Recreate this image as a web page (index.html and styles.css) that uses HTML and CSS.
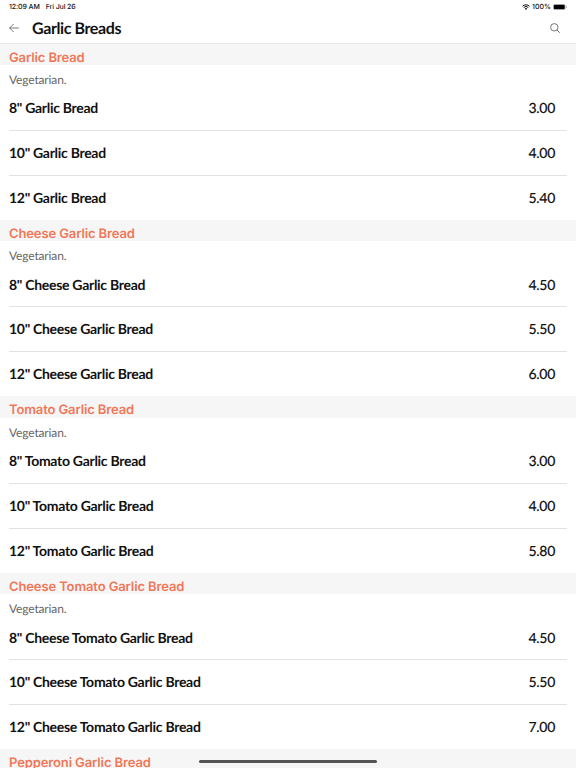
FILE: index.html
```
<!DOCTYPE html>
<html lang="en">
  <head>
    <meta charset="utf-8">
    <title>Garlic Breads</title>
    <link rel="stylesheet" href="styles.css">
  </head>
  <body>
    <div class="status-bar">
      <span class="time">12:09 AM</span>
      <span class="date">Fri Jul 26</span>
      <svg class="wifi" viewBox="0 0 16 12">
        <path d="M1 4.5a10 10 0 0 1 14 0M3.4 7a6.6 6.6 0 0 1 9.2 0" fill="none" stroke="#111" stroke-width="2"/>
        <path d="M5.4 9.2a3.8 3.8 0 0 1 5.2 0L8 12z" fill="#111"/>
      </svg>
      <span class="percent">100%</span>
      <svg class="battery" viewBox="0 0 28 12">
        <rect x="0.5" y="0.5" width="24" height="11" rx="3" fill="#fff" stroke="#999"/>
        <rect x="1.5" y="1.5" width="22" height="9" rx="2" fill="#000"/>
        <path d="M26 4v4q1.5-.5 1.5-2T26 4z" fill="#888"/>
      </svg>
    </div>
    <header class="nav">
      <svg class="back" viewBox="0 0 10 10">
        <path d="M9.8 5H.6M4.6 1L.6 5l4 4" fill="none" stroke="#555" stroke-width=".8"/>
      </svg>
      <h1>Garlic Breads</h1>
      <svg class="search" viewBox="0 0 10 10">
        <circle cx="4.3" cy="4.3" r="3.7" fill="none" stroke="#555" stroke-width=".8"/>
        <path d="M7 7l2.7 2.7" stroke="#555" stroke-width=".9"/>
      </svg>
    </header>

    <main class="menu">
      <section>
        <h2>Garlic Bread</h2>
        <p>Vegetarian.</p>
        <ul>
          <li><span class="name">8" Garlic Bread</span><span class="price">3.00</span></li>
          <li><span class="name">10" Garlic Bread</span><span class="price">4.00</span></li>
          <li><span class="name">12" Garlic Bread</span><span class="price">5.40</span></li>
        </ul>
      </section>
      <section>
        <h2>Cheese Garlic Bread</h2>
        <p>Vegetarian.</p>
        <ul>
          <li><span class="name">8" Cheese Garlic Bread</span><span class="price">4.50</span></li>
          <li><span class="name">10" Cheese Garlic Bread</span><span class="price">5.50</span></li>
          <li><span class="name">12" Cheese Garlic Bread</span><span class="price">6.00</span></li>
        </ul>
      </section>
      <section>
        <h2>Tomato Garlic Bread</h2>
        <p>Vegetarian.</p>
        <ul>
          <li><span class="name">8" Tomato Garlic Bread</span><span class="price">3.00</span></li>
          <li><span class="name">10" Tomato Garlic Bread</span><span class="price">4.00</span></li>
          <li><span class="name">12" Tomato Garlic Bread</span><span class="price">5.80</span></li>
        </ul>
      </section>
      <section>
        <h2>Cheese Tomato Garlic Bread</h2>
        <p>Vegetarian.</p>
        <ul>
          <li><span class="name">8" Cheese Tomato Garlic Bread</span><span class="price">4.50</span></li>
          <li><span class="name">10" Cheese Tomato Garlic Bread</span><span class="price">5.50</span></li>
          <li><span class="name">12" Cheese Tomato Garlic Bread</span><span class="price">7.00</span></li>
        </ul>
      </section>
      <section>
        <h2>Pepperoni Garlic Bread</h2>
      </section>
    </main>
    <div class="home-indicator"></div>
  </body>
</html>
```

FILE: styles.css
```
* {
  box-sizing: border-box;
  margin: 0;
  padding: 0;
}
body {
  height: 768px;
  overflow: hidden;
  background: #fff;
  color: #111;
  font-family: Lato, sans-serif;
  text-rendering: geometricPrecision;
}
.status-bar {
  display: flex;
  align-items: center;
  height: 14px;
  padding: 0 9px;
  font: 500 7px/14px Inter, sans-serif;
}
.time,
.date {
  letter-spacing: -.1px;
}
.date {
  margin-left: 6px;
}
.wifi {
  width: 8px;
  height: 6px;
  margin-left: auto;
}
.percent {
  margin: 0 2px;
}
.battery {
  width: 14px;
  height: 6px;
}
.nav {
  display: flex;
  align-items: center;
  height: 29.5px;
  padding: 0 16px 0 9px;
  border-bottom: 1px solid #e9e9e9;
}
.back {
  width: 10px;
  height: 10px;
}
.nav h1 {
  flex: 1;
  margin-left: 13px;
  padding-top: 2px;
  font-size: 16px;
  font-weight: 700;
  letter-spacing: -.4px;
  line-height: 28px;
}
.search {
  width: 10px;
  height: 10px;
}
section h2 {
  height: 21.5px;
  padding: 0 9px;
  background: #f6f6f6;
  color: #f07859;
  font: 600 13px/29px Inter, sans-serif;
  letter-spacing: -.12px;
}
section p {
  height: 21.1px;
  padding: 0 9px;
  color: #666;
  font-size: 12px;
  letter-spacing: -.15px;
  line-height: 29px;
}
ul {
  padding: 0 9px;
  list-style: none;
}
li {
  display: flex;
  justify-content: space-between;
  height: 44.8px;
  padding-right: 12px;
  border-bottom: 1px solid #e2e2e2;
  font-size: 14px;
  line-height: 43px;
}
li:last-child {
  height: 44.3px;
  border-bottom: none;
}
.name {
  font-weight: 700;
  letter-spacing: -.29px;
}
.price {
  font-weight: 500;
  letter-spacing: -.3px;
  -webkit-text-stroke: .1px #111;
}
.home-indicator {
  position: absolute;
  left: 199px;
  top: 760px;
  width: 178px;
  height: 3px;
  border-radius: 2px;
  background: #555;
}
```
